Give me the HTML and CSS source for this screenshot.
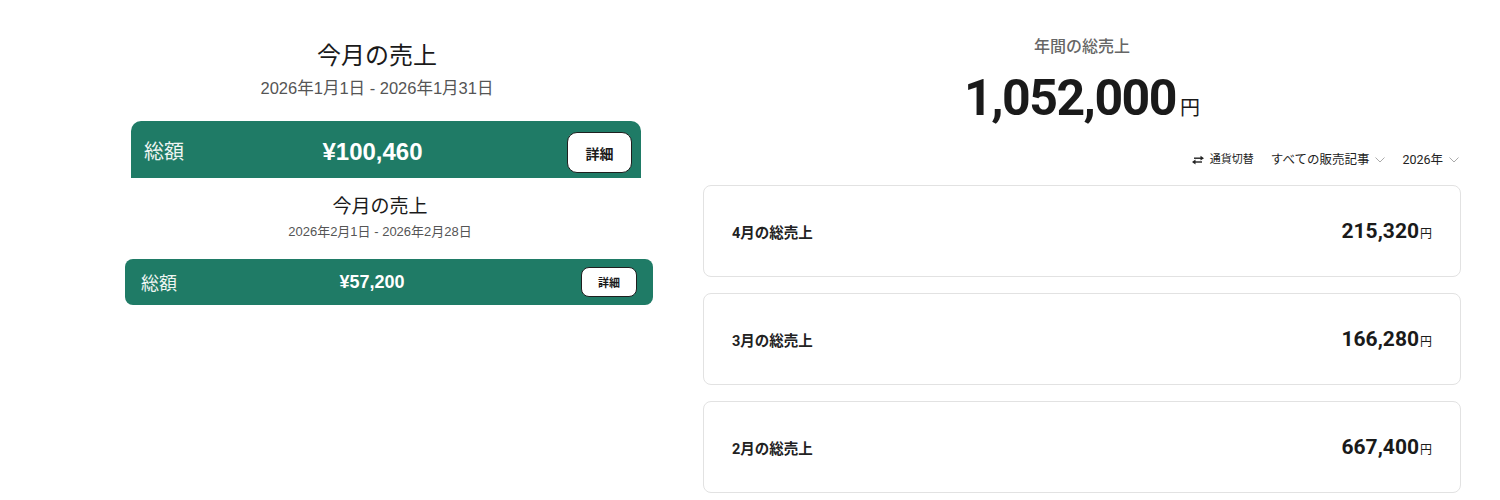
FILE: index.html
```html
<!DOCTYPE html>
<html lang="ja">
<head>
  <meta charset="UTF-8" />
  <title>売上</title>
  <link rel="stylesheet" href="styles.css">
</head>
<body>
  <div class="page">
    <div class="left">
      <div class="month month-lg">
        <div class="month-head">
          <h2>今月の売上</h2>
          <p>2026年1月1日 - 2026年1月31日</p>
        </div>
        <div class="total">
          <span class="total-label">総額</span>
          <span class="total-amount">¥100,460</span>
          <button class="detail">詳細</button>
        </div>
      </div>

      <div class="month month-sm">
        <div class="month-head">
          <h2>今月の売上</h2>
          <p>2026年2月1日 - 2026年2月28日</p>
        </div>
        <div class="total">
          <span class="total-label">総額</span>
          <span class="total-amount">¥57,200</span>
          <button class="detail">詳細</button>
        </div>
      </div>
    </div>

    <div class="right">
      <div class="year-title">年間の総売上</div>
      <div class="year-total">1,052,000<span class="yen">円</span></div>

      <div class="toolbar">
        <span class="switch">
          <svg width="14" height="10" viewBox="0 0 14 10">
            <path d="M3 3.2H10" stroke="#222" stroke-width="1.4"/>
            <path d="M9.5 0.8L13 3.2L9.5 5.6Z" fill="#222"/>
            <path d="M11 7H4" stroke="#222" stroke-width="1.4"/>
            <path d="M4.5 4.6L1 7L4.5 9.4Z" fill="#222"/>
          </svg>
          通貨切替
        </span>
        <span class="select">すべての販売記事
          <svg width="10" height="6" viewBox="0 0 10 6"><path d="M0.5 0.5L5 5L9.5 0.5" fill="none" stroke="#aaa" stroke-width="1"/></svg>
        </span>
        <span class="select">2026年
          <svg width="10" height="6" viewBox="0 0 10 6"><path d="M0.5 0.5L5 5L9.5 0.5" fill="none" stroke="#aaa" stroke-width="1"/></svg>
        </span>
      </div>

      <div class="cards">
        <div class="card">
          <span class="card-label">4月の総売上</span>
          <span class="card-value">215,320<small>円</small></span>
        </div>
        <div class="card">
          <span class="card-label">3月の総売上</span>
          <span class="card-value">166,280<small>円</small></span>
        </div>
        <div class="card">
          <span class="card-label">2月の総売上</span>
          <span class="card-value">667,400<small>円</small></span>
        </div>
      </div>
    </div>
  </div>
</body>
</html>
```

FILE: styles.css
```css
body {
  margin: 0;
  background: #fff;
  color: #222;
  font-family: "Liberation Sans", "Noto Sans CJK JP", sans-serif;
  overflow: hidden;
}
.page {
  display: flex;
  height: 500px;
}
.left {
  width: 703px;
  flex-shrink: 0;
}
.month-head {
  text-align: center;
}
.month-head h2 {
  margin: 0;
  font-weight: 400;
  color: #1a1a1a;
}
.month-head p {
  margin: 0;
  color: #555;
}
.total {
  display: flex;
  align-items: center;
  justify-content: space-between;
  background: #1f7b66;
  color: #fff;
  box-sizing: border-box;
}
.total-label {
  color: #eef5f2;
}
.total-amount {
  font-weight: 700;
}
.detail {
  background: #fff;
  color: #1a1a1a;
  border: 1.5px solid #1f1f1f;
  font-family: inherit;
  font-weight: 700;
  padding: 0;
}

/* January block */
.month-lg {
  width: 510px;
  margin-left: 131px;
  padding-top: 41px;
}
.month-lg .month-head {
  margin-right: 18px;
}
.month-lg h2 {
  font-size: 24px;
  line-height: 30px;
}
.month-lg p {
  font-size: 16.5px;
  line-height: 20px;
  margin-top: 7px;
}
.month-lg .total {
  margin-top: 23px;
  height: 57px;
  padding: 11px 9px 0 13px;
  border-radius: 10px 10px 0 0;
  align-items: flex-start;
}
.month-lg .total-label {
  font-size: 20px;
  line-height: 24px;
  margin-top: 8px;
}
.month-lg .total-amount {
  font-size: 24px;
  line-height: 28px;
  margin-top: 6px;
  margin-left: -6px;
}
.month-lg .detail {
  width: 65px;
  height: 41px;
  border-radius: 10px;
  font-size: 14px;
}

/* February block */
.month-sm {
  width: 528px;
  margin-left: 125px;
  padding-top: 16px;
}
.month-sm .month-head {
  margin-right: 18px;
}
.month-sm h2 {
  font-size: 19px;
  line-height: 26px;
}
.month-sm p {
  font-size: 13px;
  line-height: 18px;
  margin-top: 3px;
}
.month-sm .total {
  margin-top: 18px;
  height: 46px;
  padding: 0 16px;
  border-radius: 8px;
}
.month-sm .total-label {
  font-size: 18px;
}
.month-sm .total-amount {
  font-size: 18px;
  margin-left: -14px;
}
.month-sm .detail {
  width: 56px;
  height: 30px;
  border-radius: 8px;
  font-size: 11px;
}

/* yearly side */
.right {
  width: 758px;
  flex-shrink: 0;
  font-family: Roboto, "Noto Sans CJK JP", sans-serif;
  padding-top: 37px;
}
.year-title {
  text-align: center;
  font-size: 16px;
  line-height: 20px;
  font-weight: 500;
  color: #666;
}
.year-total {
  margin-top: 11px;
  text-align: center;
  font-size: 50px;
  line-height: 60px;
  font-weight: 700;
  letter-spacing: -1.5px;
  color: #1a1a1a;
}
.yen {
  font-size: 20px;
  font-weight: 400;
  letter-spacing: 0;
  margin-left: 4px;
}
.toolbar {
  margin-top: 12px;
  display: flex;
  justify-content: flex-end;
  align-items: center;
  gap: 17px;
  padding-right: 2px;
  font-size: 12.5px;
  line-height: 20px;
  color: #222;
}
.switch {
  display: flex;
  align-items: center;
  gap: 5px;
  font-size: 11px;
}
.select {
  display: flex;
  align-items: center;
  gap: 6px;
}
.cards {
  margin-top: 15px;
  display: flex;
  flex-direction: column;
  gap: 16px;
}
.card {
  height: 92px;
  box-sizing: border-box;
  border: 1px solid #e2e2e2;
  border-radius: 8px;
  display: flex;
  align-items: center;
  justify-content: space-between;
  padding: 0 28px;
}
.card-label {
  font-size: 14.5px;
  font-weight: 700;
  color: #222;
}
.card-value {
  font-size: 21px;
  font-weight: 700;
  color: #1a1a1a;
}
.card-value small {
  font-size: 12px;
  font-weight: 400;
  margin-left: 1px;
}
```
